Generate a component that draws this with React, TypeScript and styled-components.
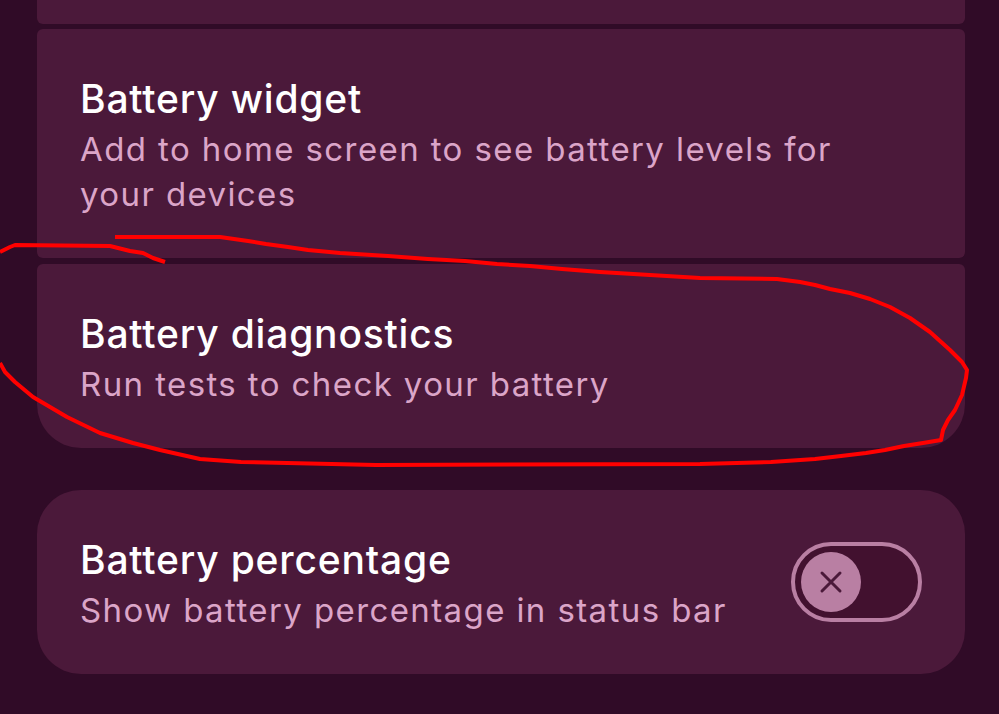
import React from 'react';
import styled, { createGlobalStyle } from 'styled-components';

const GlobalStyle = createGlobalStyle`
    html, body {
        margin: 0;
        padding: 0;
        background: #300b27;
        overflow: hidden;
    }
    body {
        font-family: Inter, "Open Sans", sans-serif;
        -webkit-font-smoothing: antialiased;
    }
`;

const Screen = styled.div`
    position: relative;
    width: 999px;
    height: 714px;
    overflow: hidden;
    background: #300b27;
`;

const List = styled.div`
    display: flex;
    flex-direction: column;
    padding: 0 34px 0 37px;
`;

type Corners = { top: number; bottom: number; gapAfter: number };

const Card = styled.div<{ $corners: Corners }>`
    display: flex;
    align-items: center;
    justify-content: space-between;
    padding: 46px 43px 41px;
    background: #4b193a;
    border-radius: ${({ $corners }) =>
        `${$corners.top}px ${$corners.top}px ${$corners.bottom}px ${$corners.bottom}px`};
    margin-bottom: ${({ $corners }) => $corners.gapAfter}px;
`;

const ClippedCard = styled(Card)`
    height: 124px;
    margin-top: -100px;
    box-sizing: border-box;
`;

const TextBlock = styled.div`
    display: flex;
    flex-direction: column;
    max-width: 800px;
`;

const Title = styled.div`
    color: #ffffff;
    font-size: 39px;
    line-height: 48px;
    font-weight: 500;
    letter-spacing: 0.8px;
`;

const Subtitle = styled.div`
    margin-top: 4px;
    color: #dba5c8;
    font-size: 33px;
    line-height: 45px;
    font-weight: 400;
    letter-spacing: 1.4px;
`;

const Switch = styled.div`
    flex: none;
    box-sizing: border-box;
    width: 131px;
    height: 80px;
    margin-top: -6px;
    border: 4px solid #b97fa3;
    border-radius: 40px;
    background: #42112f;
    display: flex;
    align-items: center;
    padding-left: 6px;
`;

const Thumb = styled.div`
    width: 60px;
    height: 60px;
    border-radius: 50%;
    background: #b97fa3;
    display: flex;
    align-items: center;
    justify-content: center;
`;

const Annotation = styled.svg`
    position: absolute;
    left: 0;
    top: 0;
    pointer-events: none;
`;

const scribbleTop =
    '115,237 220,237 248,241 266,244 288,247 308,250 340,253 388,256 428,259 465,261 497,264 530,266 562,269 600,272 650,275 700,278 777,279 800,282 815,285 830,289 850,293 870,299 890,307 910,318 930,332 950,350 962,362 967,370 966,378 962,395 955,410 948,420 943,430 941,440 923,443 904,446 885,450 866,453 841,456 815,459 771,462 700,464 376,465 241,462 200,459 160,450 133,443 100,433 67,417 33,397 15,382 5,372 0,363';

const scribbleLeft = '0,252 10,247 15,245 110,246 130,251 143,253 153,258 165,262';

const CloseMark = () => (
    <svg width="24" height="24" viewBox="0 0 24 24">
        <path d="M3 3 L21 21 M21 3 L3 21" stroke="#4b193a" strokeWidth="3" strokeLinecap="round" />
    </svg>
);

export default function App() {
    return (
        <Screen>
            <GlobalStyle />
            <List>
                <ClippedCard $corners={{ top: 6, bottom: 6, gapAfter: 5 }} />
                <Card $corners={{ top: 6, bottom: 6, gapAfter: 6 }}>
                    <TextBlock>
                        <Title>Battery widget</Title>
                        <Subtitle>Add to home screen to see battery levels for your devices</Subtitle>
                    </TextBlock>
                </Card>
                <Card $corners={{ top: 6, bottom: 44, gapAfter: 42 }}>
                    <TextBlock>
                        <Title>Battery diagnostics</Title>
                        <Subtitle>Run tests to check your battery</Subtitle>
                    </TextBlock>
                </Card>
                <Card $corners={{ top: 44, bottom: 44, gapAfter: 0 }}>
                    <TextBlock>
                        <Title>Battery percentage</Title>
                        <Subtitle>Show battery percentage in status bar</Subtitle>
                    </TextBlock>
                    <Switch>
                        <Thumb>
                            <CloseMark />
                        </Thumb>
                    </Switch>
                </Card>
            </List>
            <Annotation width="999" height="714" viewBox="0 0 999 714">
                <polyline points={scribbleTop} fill="none" stroke="#ff0000" strokeWidth="4" strokeLinejoin="round" />
                <polyline points={scribbleLeft} fill="none" stroke="#ff0000" strokeWidth="4" strokeLinejoin="round" />
            </Annotation>
        </Screen>
    );
}
